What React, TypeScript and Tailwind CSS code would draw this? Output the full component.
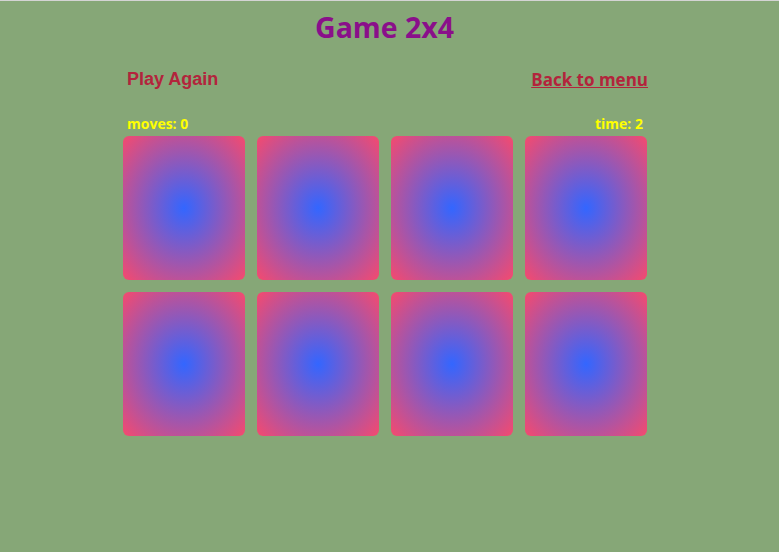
const cards = Array.from({ length: 8 }, (_, i) => i);

export default function App() {
  return (
    <div className="h-[552px] w-[779px] border-t border-[#d4d4d4] bg-[#86a777] font-['Open_Sans',sans-serif]">
      <h1 className="mt-[8px] ml-[315px] text-[28.5px] leading-[36px] font-bold text-[#8a0f8a]">Game 2x4</h1>

      <div className="ml-[123px] mt-[23px] flex w-[525px] items-start justify-between pl-[4px]">
        <button className="mt-[1px] font-['Liberation_Sans',sans-serif] text-[18px] leading-[20px] font-bold text-[#b3243c]">
          Play Again
        </button>
        <a href="#" className="mt-[1px] text-[17px] leading-[22px] font-bold text-[#b3243c] underline">
          Back to menu
        </a>
      </div>

      <div className="ml-[123px] mt-[24px] w-[524px]">
        <div className="flex justify-between px-[4px] text-[14px] leading-[17px] font-bold text-[#ffff00]">
          <span>moves: 0</span>
          <span>time: 2</span>
        </div>
        <div className="mt-[4px] grid grid-cols-4 gap-[12px]">
          {cards.map(c => (
            <div
              key={c}
              className="h-[144px] rounded-[6px] bg-[radial-gradient(#3366ff,#f54a6e)]"
            />
          ))}
        </div>
      </div>
    </div>
  );
}
